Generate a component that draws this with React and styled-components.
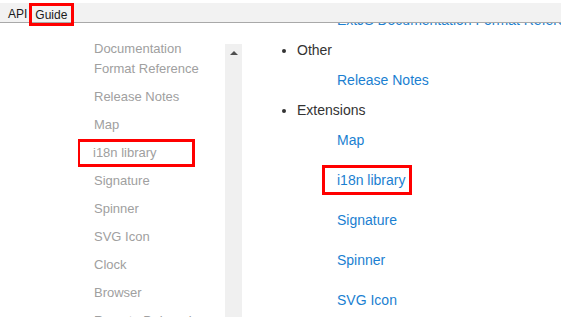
import React from "react";
import styled, { createGlobalStyle } from "styled-components";

const GlobalStyle = createGlobalStyle`
  html, body {
    margin: 0;
    padding: 0;
    overflow: hidden;
    background: #fff;
    font-family: "Liberation Sans", Arial, sans-serif;
  }
`;

const TopBar = styled.header`
  position: fixed;
  top: 3px;
  left: 0;
  right: 0;
  height: 19px;
  background: #f2f2f2;
  border-bottom: 1px solid #a9a9a9;
  display: flex;
  align-items: flex-start;
  padding-left: 8px;
  z-index: 10;
`;

const Tab = styled.div`
  box-sizing: border-box;
  height: ${({ $boxed }) => ($boxed ? "23px" : "17px")};
  margin: ${({ $boxed }) => ($boxed ? "0 0 0 2px" : "3px 0 0 0")};
  padding: ${({ $boxed }) => ($boxed ? "1px 4px 0 3px" : "0")};
  border: ${({ $boxed }) => ($boxed ? "3px solid #f00" : "none")};
  display: flex;
  align-items: center;
  font-size: 12px;
  line-height: 17px;
  color: #1a1a1a;
`;

const Page = styled.div`
  display: flex;
  align-items: flex-start;
  height: 317px;
`;

const Sidebar = styled.aside`
  display: flex;
  margin: 44px 0 0 78px;
  width: 164px;
  height: 273px;
  flex-shrink: 0;
`;

const NavList = styled.ul`
  list-style: none;
  margin: 0;
  padding: 0;
  width: 147px;
  overflow: hidden;
`;

const NavInner = styled.div`
  margin-top: -9px;
`;

const NavItem = styled.li`
  box-sizing: border-box;
  font-size: 13px;
  line-height: 20px;
  color: #a0a0a0;
  padding: ${({ $boxed }) => ($boxed ? "1px 0 1px 13px" : "4px 0 4px 16px")};
  border: ${({ $boxed }) => ($boxed ? "3px solid #f00" : "none")};
  width: ${({ $boxed }) => ($boxed ? "118px" : "auto")};
  margin-left: ${({ $boxed }) => ($boxed ? "-1px" : "0")};
  white-space: nowrap;
`;

const ScrollTrack = styled.div`
  width: 17px;
  background: #f0f0f0;
  display: flex;
  justify-content: center;
  padding-top: 6px;
  box-sizing: border-box;
`;

const Main = styled.main`
  flex: 1;
  min-width: 0;
  white-space: nowrap;
`;

const TopList = styled.ul`
  margin: 0;
  padding-left: 55px;
  list-style: disc;
  color: #333;
  font-size: 14px;
  line-height: 20px;
`;

const TopItem = styled.li``;

const SubList = styled.ul`
  list-style: none;
  margin: 0;
  padding-left: 40px;
`;

const SubItem = styled.li`
  display: flex;
  padding: ${({ $boxed }) => ($boxed ? "5px 0" : "10px 0")};
`;

const Link = styled.a`
  display: block;
  color: #1b7fd1;
  text-decoration: none;
  font-size: 14px;
  line-height: 20px;
  box-sizing: border-box;
  border: ${({ $boxed }) => ($boxed ? "3px solid #f00" : "none")};
  padding: ${({ $boxed }) => ($boxed ? "2px 4px 2px 12px" : "0")};
  margin-left: ${({ $boxed }) => ($boxed ? "-15px" : "0")};
`;

const navItems = [
  "Release Notes",
  "Map",
  "i18n library",
  "Signature",
  "Spinner",
  "SVG Icon",
  "Clock",
  "Browser",
  "Remote Debugging",
];

const extensions = ["Map", "i18n library", "Signature", "Spinner", "SVG Icon"];

export default function App() {
  return (
    <>
      <GlobalStyle />
      <TopBar>
        <Tab>API</Tab>
        <Tab $boxed>Guide</Tab>
      </TopBar>
      <Page>
        <Sidebar>
          <NavList>
            <NavInner>
              <NavItem>
                Documentation
                <br />
                Format Reference
              </NavItem>
              {navItems.map((item) => (
                <NavItem key={item} $boxed={item === "i18n library"}>
                  {item}
                </NavItem>
              ))}
            </NavInner>
          </NavList>
          <ScrollTrack>
            <svg width="8" height="5" viewBox="0 0 8 5">
              <path d="M0 5 L4 1 L8 5 Z" fill="#505050" />
            </svg>
          </ScrollTrack>
        </Sidebar>
        <Main>
          <TopList>
            <SubList>
              <SubItem>
                <Link href="#">ExtJS Documentation Format Reference</Link>
              </SubItem>
            </SubList>
            <TopItem>
              Other
              <SubList>
                <SubItem>
                  <Link href="#">Release Notes</Link>
                </SubItem>
              </SubList>
            </TopItem>
            <TopItem>
              Extensions
              <SubList>
                {extensions.map((item) => (
                  <SubItem key={item} $boxed={item === "i18n library"}>
                    <Link href="#" $boxed={item === "i18n library"}>
                      {item}
                    </Link>
                  </SubItem>
                ))}
              </SubList>
            </TopItem>
          </TopList>
        </Main>
      </Page>
    </>
  );
}
